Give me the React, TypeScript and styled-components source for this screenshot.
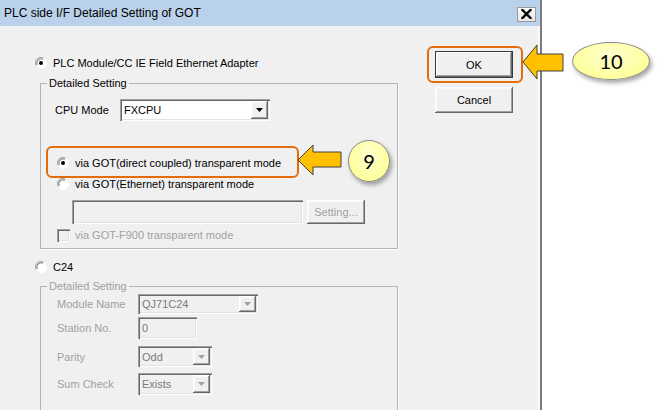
import React from "react";
import styled, { createGlobalStyle } from "styled-components";

const Global = createGlobalStyle`
  html, body { margin: 0; padding: 0; background: #fff; }
  body { font-family: "Liberation Sans", Arial, sans-serif; }
  * { box-sizing: border-box; }
`;

const Page = styled.div`
  position: relative;
  width: 657px;
  height: 410px;
  overflow: hidden;
  display: flex;
  background: #fff;
`;

const Dialog = styled.div`
  width: 542px;
  height: 410px;
  flex: none;
  display: flex;
  flex-direction: column;
  background: #f0f0f0;
  border-right: 2px solid #7b7b7b;
  box-shadow: inset -2px 0 0 #fafafa;
`;

const TitleBar = styled.div`
  height: 26px;
  flex: none;
  display: flex;
  align-items: center;
  justify-content: space-between;
  padding: 0 4px 0 4px;
  background: #b9d1ea;
  font-size: 12px;
  color: #000;
`;

const CloseBtn = styled.div`
  width: 19px;
  height: 15px;
  margin-top: 2px;
  display: flex;
  align-items: center;
  justify-content: center;
  background: linear-gradient(#fdfdfd, #e6e6e6);
  border: 1px solid #9a9a9a;
`;

const Body = styled.div`
  flex: 1;
  min-height: 0;
  display: flex;
`;

const LeftCol = styled.div`
  width: 400px;
  flex: none;
  padding: 31px 0 0 35px;
  display: flex;
  flex-direction: column;
`;

const RightCol = styled.div`
  margin-left: auto;
  padding: 25px 27px 0 0;
  display: flex;
  flex-direction: column;
  gap: 9px;
`;

const OptionRow = styled.label<{ $mt?: number; $ml?: number; $disabled?: boolean }>`
  display: flex;
  align-items: center;
  height: 16px;
  margin-top: ${(p) => p.$mt ?? 0}px;
  margin-left: ${(p) => p.$ml ?? 0}px;
  gap: 6px;
  font-size: 11px;
  color: ${(p) => (p.$disabled ? "#a0a0a0" : "#000")};
  white-space: nowrap;
`;

const Group = styled.fieldset<{ $mt: number; $pb: number }>`
  margin: ${(p) => p.$mt}px 0 0 5px;
  width: 358px;
  min-width: 0;
  padding: 0 0 ${(p) => p.$pb}px 0;
  border: 1px solid #b4b4b4;
  box-shadow: 1px 1px 0 #fff;
  display: flex;
  flex-direction: column;
`;

const Legend = styled.legend<{ $disabled?: boolean }>`
  margin-left: 6px;
  padding: 0 2px;
  font-size: 11px;
  line-height: 14px;
  color: ${(p) => (p.$disabled ? "#a0a0a0" : "#000")};
`;

const FieldRow = styled.div<{ $mt: number; $ml: number; $h: number }>`
  display: flex;
  align-items: center;
  height: ${(p) => p.$h}px;
  margin-top: ${(p) => p.$mt}px;
  margin-left: ${(p) => p.$ml}px;
  gap: 4px;
`;

const FieldLabel = styled.span<{ $w: number; $disabled?: boolean }>`
  width: ${(p) => p.$w}px;
  flex: none;
  font-size: 11px;
  color: ${(p) => (p.$disabled ? "#a0a0a0" : "#000")};
  white-space: nowrap;
`;

const sunken = `
  box-shadow: inset 1px 1px 0 #a0a0a0, inset 2px 2px 0 #696969,
    inset -1px -1px 0 #ffffff, inset -2px -2px 0 #e3e3e3;
`;

const raised = `
  box-shadow: inset -1px -1px 0 #696969, inset 1px 1px 0 #ffffff,
    inset -2px -2px 0 #a0a0a0, inset 2px 2px 0 #f8f8f8;
`;

const Combo = styled.div<{ $w: number; $h: number; $disabled?: boolean }>`
  width: ${(p) => p.$w}px;
  height: ${(p) => p.$h}px;
  flex: none;
  display: flex;
  align-items: center;
  padding: 2px 2px 2px 4px;
  background: ${(p) => (p.$disabled ? "#f0f0f0" : "#fff")};
  ${sunken}
  font-size: 11px;
  color: ${(p) => (p.$disabled ? "#7a7a7a" : "#000")};
`;

const ComboValue = styled.span`
  flex: 1;
  white-space: nowrap;
  overflow: hidden;
`;

const DropBtn = styled.div<{ $disabled?: boolean }>`
  width: 17px;
  align-self: stretch;
  flex: none;
  display: flex;
  align-items: center;
  justify-content: center;
  background: #f0f0f0;
  ${raised}
  color: ${(p) => (p.$disabled ? "#a0a0a0" : "#000")};
`;

const TextBox = styled.div<{ $w: number; $h: number }>`
  width: ${(p) => p.$w}px;
  height: ${(p) => p.$h}px;
  flex: none;
  display: flex;
  align-items: center;
  padding-left: 4px;
  background: #f0f0f0;
  ${sunken}
  font-size: 11px;
  color: #7a7a7a;
`;

const Button = styled.div<{ $w: number; $h: number; $default?: boolean; $disabled?: boolean }>`
  width: ${(p) => p.$w}px;
  height: ${(p) => p.$h}px;
  flex: none;
  display: flex;
  align-items: center;
  justify-content: center;
  background: #f0f0f0;
  font-size: 11px;
  color: ${(p) => (p.$disabled ? "#a0a0a0" : "#000")};
  ${raised}
  ${(p) =>
    p.$default
      ? `border: 1px solid #3a3a3a;
         box-shadow: inset -1px -1px 0 #696969, inset 1px 1px 0 #ffffff,
           inset -2px -2px 0 #a0a0a0;`
      : ""}
`;

const CheckBox = styled.span`
  width: 13px;
  height: 13px;
  flex: none;
  background: #f0f0f0;
  ${sunken}
`;

const Highlight = styled.div`
  position: absolute;
  border: 2px solid #e46c0a;
  border-radius: 6px;
  pointer-events: none;
`;

const ArrowSvg = styled.svg`
  position: absolute;
  overflow: visible;
`;

const Callout = styled.div`
  position: absolute;
  display: flex;
  align-items: center;
  justify-content: center;
  border-radius: 50%;
  border: 1px solid #8a8a8a;
  background: radial-gradient(ellipse at 50% 35%, #ffffd0 0%, #ffff9c 70%, #f6f088 100%);
  box-shadow: 2px 3px 4px rgba(0, 0, 0, 0.35);
  font-family: Lato, "Open Sans", sans-serif;
  font-size: 20px;
  color: #000;
`;

const Radio = ({ checked, disabled }: { checked?: boolean; disabled?: boolean }) => (
  <svg width="12" height="12" viewBox="0 0 12 12" style={{ flex: "none" }}>
    <circle cx="6" cy="6" r="5.5" fill={disabled ? "#f0f0f0" : "#fff"} />
    <path d="M1.2 8.5 A5.3 5.3 0 0 1 8.5 1.2" fill="none" stroke="#a0a0a0" strokeWidth="1" />
    <path d="M2.2 7.8 A4.2 4.2 0 0 1 7.8 2.2" fill="none" stroke="#6a6a6a" strokeWidth="1" />
    <path d="M10.8 3.5 A5.3 5.3 0 0 1 3.5 10.8" fill="none" stroke="#ffffff" strokeWidth="1" />
    {checked && <circle cx="6" cy="6" r="2" fill="#000" />}
  </svg>
);

const Tri = () => (
  <svg width="7" height="4" viewBox="0 0 7 4">
    <path d="M0 0 H7 L3.5 4 Z" fill="currentColor" />
  </svg>
);

const LeftArrow = ({ w, h, headW, shaftTop, shaftBot }: { w: number; h: number; headW: number; shaftTop: number; shaftBot: number }) => {
  const mid = h / 2;
  const d = `M1 ${mid} L${headW} 1 L${headW} ${shaftTop} L${w} ${shaftTop} L${w} ${shaftBot} L${headW} ${shaftBot} L${headW} ${h - 1} Z`;
  return <path d={d} fill="#ffc000" stroke="#404040" strokeWidth="1" strokeLinejoin="miter" />;
};

export default function App() {
  return (
    <>
      <Global />
      <Page>
        <Dialog>
          <TitleBar>
            <span>PLC side I/F Detailed Setting of GOT</span>
            <CloseBtn>
              <svg width="11" height="10" viewBox="0 0 11 10">
                <path d="M1.5 1 L9.5 9 M9.5 1 L1.5 9" stroke="#000" strokeWidth="2.4" strokeLinecap="square" />
              </svg>
            </CloseBtn>
          </TitleBar>
          <Body>
            <LeftCol>
              <OptionRow>
                <Radio checked />
                PLC Module/CC IE Field Ethernet Adapter
              </OptionRow>
              <Group $mt={7} $pb={5}>
                <Legend>Detailed Setting</Legend>
                <FieldRow $mt={9} $ml={14} $h={22}>
                  <FieldLabel $w={61}>CPU Mode</FieldLabel>
                  <Combo $w={150} $h={22}>
                    <ComboValue>FXCPU</ComboValue>
                    <DropBtn>
                      <Tri />
                    </DropBtn>
                  </Combo>
                </FieldRow>
                <OptionRow $mt={34} $ml={16}>
                  <Radio checked />
                  via GOT(direct coupled) transparent mode
                </OptionRow>
                <OptionRow $mt={5} $ml={16}>
                  <Radio />
                  via GOT(Ethernet) transparent mode
                </OptionRow>
                <FieldRow $mt={8} $ml={31} $h={24}>
                  <TextBox $w={231} $h={24} />
                  <Button $w={58} $h={24} $disabled>
                    Setting...
                  </Button>
                </FieldRow>
                <OptionRow $mt={3} $ml={16} $disabled style={{ gap: 5 }}>
                  <CheckBox />
                  via GOT-F900 transparent mode
                </OptionRow>
              </Group>
              <OptionRow $mt={12}>
                <Radio />
                C24
              </OptionRow>
              <Group $mt={6} $pb={40}>
                <Legend $disabled>Detailed Setting</Legend>
                <FieldRow $mt={1} $ml={16} $h={20}>
                  <FieldLabel $w={77} $disabled>
                    Module Name
                  </FieldLabel>
                  <Combo $w={120} $h={20} $disabled>
                    <ComboValue>QJ71C24</ComboValue>
                    <DropBtn $disabled>
                      <Tri />
                    </DropBtn>
                  </Combo>
                </FieldRow>
                <FieldRow $mt={3} $ml={16} $h={22}>
                  <FieldLabel $w={77} $disabled>
                    Station No.
                  </FieldLabel>
                  <TextBox $w={59} $h={22}>0</TextBox>
                </FieldRow>
                <FieldRow $mt={7} $ml={16} $h={21}>
                  <FieldLabel $w={77} $disabled>
                    Parity
                  </FieldLabel>
                  <Combo $w={74} $h={21} $disabled>
                    <ComboValue>Odd</ComboValue>
                    <DropBtn $disabled>
                      <Tri />
                    </DropBtn>
                  </Combo>
                </FieldRow>
                <FieldRow $mt={6} $ml={16} $h={22}>
                  <FieldLabel $w={77} $disabled>
                    Sum Check
                  </FieldLabel>
                  <Combo $w={74} $h={22} $disabled>
                    <ComboValue>Exists</ComboValue>
                    <DropBtn $disabled>
                      <Tri />
                    </DropBtn>
                  </Combo>
                </FieldRow>
              </Group>
            </LeftCol>
            <RightCol>
              <Button $w={78} $h={27} $default>
                OK
              </Button>
              <Button $w={78} $h={26}>
                Cancel
              </Button>
            </RightCol>
          </Body>
        </Dialog>

        <Highlight style={{ left: 46, top: 146, width: 253, height: 32 }} />
        <Highlight style={{ left: 427, top: 46, width: 96, height: 37 }} />

        <ArrowSvg style={{ left: 297, top: 144 }} width="46" height="32" viewBox="0 0 46 32">
          <LeftArrow w={44} h={32} headW={16} shaftTop={8} shaftBot={23} />
        </ArrowSvg>
        <Callout style={{ left: 348, top: 140, width: 42, height: 42 }}>9</Callout>

        <ArrowSvg style={{ left: 522, top: 44 }} width="44" height="37" viewBox="0 0 44 37">
          <LeftArrow w={41} h={36} headW={15} shaftTop={10} shaftBot={27} />
        </ArrowSvg>
        <Callout style={{ left: 572, top: 42, width: 78, height: 38 }}>10</Callout>
      </Page>
    </>
  );
}
